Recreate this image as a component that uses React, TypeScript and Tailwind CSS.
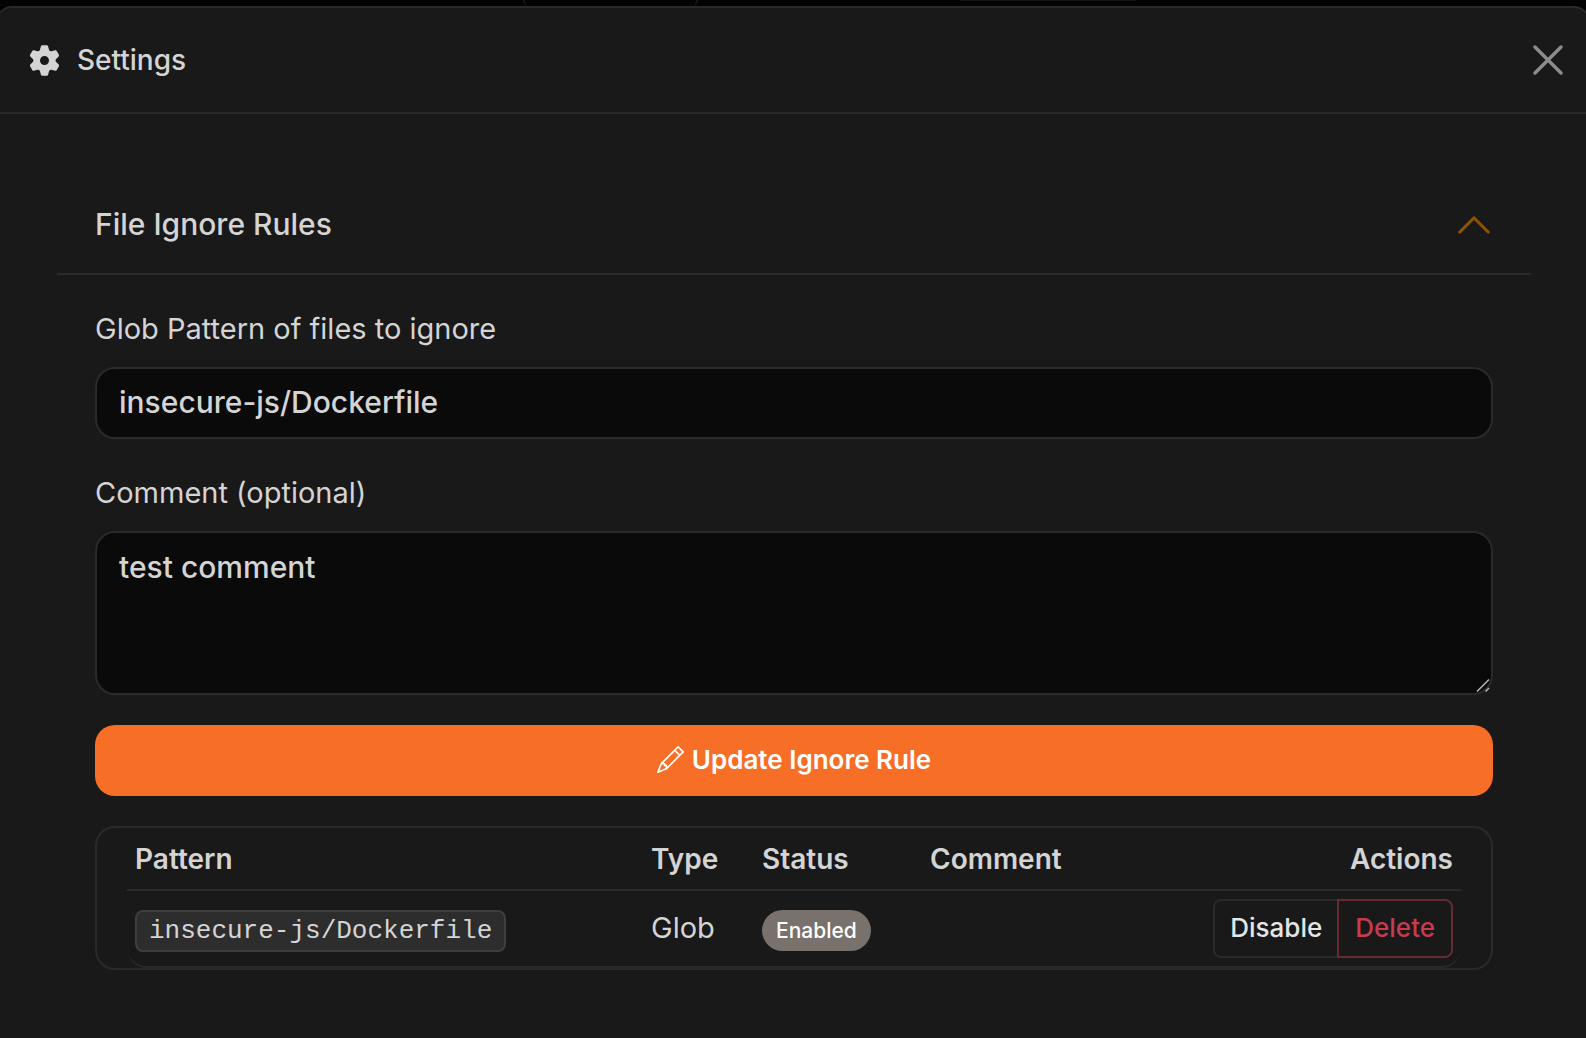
import { useState } from "react";
import { BsChevronUp, BsPencil } from "react-icons/bs";

type IgnoreRule = {
  id: number;
  pattern: string;
  type: string;
  enabled: boolean;
  comment: string;
};

const initialRules: IgnoreRule[] = [
  {
    id: 1,
    pattern: "insecure-js/Dockerfile",
    type: "Glob",
    enabled: true,
    comment: "",
  },
];

// six rounded teeth around a thick ring
const GearIcon = () => (
  <svg
    viewBox="-15.5 -15.5 31 31"
    className="size-[31px]"
    fill="currentColor"
    stroke="currentColor"
    strokeLinejoin="round"
    aria-hidden="true"
  >
    <circle r="7.8" fill="none" strokeWidth="6.6" />
    {[0, 60, 120, 180, 240, 300].map((deg) => (
      <path
        key={deg}
        d="M-2.3-14H2.3L3.8-8.5H-3.8Z"
        strokeWidth="2.6"
        transform={`rotate(${deg})`}
      />
    ))}
  </svg>
);

const CloseIcon = () => (
  <svg viewBox="0 0 30 30" className="size-[30px]" aria-hidden="true">
    <path
      d="M2 2 28 28M28 2 2 28"
      fill="none"
      stroke="currentColor"
      strokeWidth="3.4"
      strokeLinecap="round"
    />
  </svg>
);

const RulesTable = ({
  rules,
  onToggle,
  onDelete,
}: {
  rules: IgnoreRule[];
  onToggle: (id: number) => void;
  onDelete: (id: number) => void;
}) => (
  <div className="rounded-[20px] border-2 border-[#2a2a2a] px-[30px]">
    <div className="overflow-hidden rounded-b-[20px] border-b-2 border-[#2a2a2a]">
      <table className="w-full text-left text-[29px] leading-[44px]">
        <thead className="text-[28px]">
          <tr className="border-b-2 border-[#2a2a2a]">
            <th className="w-[516px] px-2 pt-[9px] pb-2 font-semibold">Pattern</th>
            <th className="w-[111px] px-2 pt-[9px] pb-2 font-semibold">Type</th>
            <th className="w-[168px] px-2 pt-[9px] pb-2 font-semibold">Status</th>
            <th className="px-2 pt-[9px] pb-2 font-semibold">Comment</th>
            <th className="px-2 pt-[9px] pb-2 text-right font-semibold">Actions</th>
          </tr>
        </thead>
        <tbody>
          {rules.map((rule) => (
            <tr key={rule.id}>
              <td className="p-2">
                <code className="mt-1 flex h-[42px] w-fit items-center rounded-lg border-2 border-[#3e3e3e] bg-[#2d2d2d] px-3 font-['Liberation_Mono',monospace] text-[26px]">
                  {rule.pattern}
                </code>
              </td>
              <td className="px-2 pt-2 pb-[10px]">{rule.type}</td>
              <td className="p-2">
                <span className="mt-1 flex h-[41px] w-fit items-center rounded-full bg-[#79716b] px-[14px] text-[21px] font-medium text-white">
                  {rule.enabled ? "Enabled" : "Disabled"}
                </span>
              </td>
              <td className="p-2">{rule.comment}</td>
              <td className="p-2">
                <div className="flex justify-end text-[26px] font-medium">
                  <button
                    type="button"
                    onClick={() => onToggle(rule.id)}
                    className="h-[59px] rounded-l-lg border-2 border-r-0 border-[#2a2a2a] px-[15px] pb-0.5 text-[#e5e5e5]"
                  >
                    {rule.enabled ? "Disable" : "Enable"}
                  </button>
                  <button
                    type="button"
                    onClick={() => onDelete(rule.id)}
                    className="h-[59px] rounded-r-lg border-2 border-[#672932] px-4 pb-0.5 text-[#c53c51]"
                  >
                    Delete
                  </button>
                </div>
              </td>
            </tr>
          ))}
        </tbody>
      </table>
    </div>
  </div>
);

export default function App() {
  const [rules, setRules] = useState(initialRules);
  const [open, setOpen] = useState(true);

  const toggleRule = (id: number) =>
    setRules(rules.map((r) => (r.id === id ? { ...r, enabled: !r.enabled } : r)));
  const deleteRule = (id: number) => setRules(rules.filter((r) => r.id !== id));

  return (
    <div className="flex min-h-screen flex-col overflow-hidden bg-[#030303] font-['Inter',sans-serif] text-[#d4d4d4]">
      {/* sliver of the dimmed page behind the dialog */}
      <div className="flex h-[6px] items-start pl-[33%]" aria-hidden="true">
        <div className="h-[6px] w-[175px] rounded-b-xl border-x-2 border-[#161616]" />
        <div className="ml-[262px] h-px w-[176px] bg-[#141414]" />
      </div>
      <div
        role="dialog"
        aria-labelledby="settings-title"
        className="-mx-1 flex grow flex-col rounded-t-2xl border-2 border-b-0 border-[#2a2a2a] bg-[#191919]"
      >
        {/* header */}
        <header className="flex h-[106px] items-center gap-[17px] border-b-2 border-[#2a2a2a] pr-[25px] pl-[31px]">
          <GearIcon />
          <h1 id="settings-title" className="text-[28px] font-medium">
            Settings
          </h1>
          <button type="button" aria-label="Close" className="ml-auto text-[#8c8c8c]">
            <CloseIcon />
          </button>
        </header>

        <main className="pt-[60px] pr-[57px] pb-[66px] pl-[59px]">
          <h2 className="border-b-2 border-[#2a2a2a]">
            <button
              type="button"
              aria-expanded={open}
              onClick={() => setOpen(!open)}
              className="flex h-[99px] w-full items-center justify-between px-[38px] pt-0.5 text-[30px] font-medium"
            >
              File Ignore Rules
              <BsChevronUp
                strokeWidth={0.3}
                className={
                  open ? "size-[38px] text-[#8f5400]" : "size-[38px] rotate-180 text-[#8f5400]"
                }
              />
            </button>
          </h2>

          {open && (
            <div className="px-[38px] pt-8">
              <form onSubmit={(e) => e.preventDefault()}>
                <label htmlFor="pattern" className="block text-[29px] leading-[44px]">
                  Glob Pattern of files to ignore
                </label>
                <input
                  id="pattern"
                  type="text"
                  defaultValue="insecure-js/Dockerfile"
                  className="mt-4 h-[72px] w-full rounded-[20px] border-2 border-[#2a2a2a] bg-[#0a0a0a] px-[22px] pb-0.5 text-[30px] font-medium"
                />

                <label htmlFor="comment" className="mt-8 block text-[29px] leading-[44px]">
                  Comment (optional)
                </label>
                <div className="relative mt-4">
                  <textarea
                    id="comment"
                    defaultValue="test comment"
                    className="block h-[164px] w-full rounded-[20px] border-2 border-[#2a2a2a] bg-[#0a0a0a] px-[22px] py-3 text-[30px] leading-[44px] font-medium [&::-webkit-resizer]:bg-transparent"
                  />
                  {/* resize grip */}
                  <svg
                    viewBox="0 0 16 16"
                    className="pointer-events-none absolute right-0.5 bottom-0.5 size-4"
                    aria-hidden="true"
                  >
                    <path
                      d="M2 14.5 14 2.5M10.5 14.5 14 11"
                      fill="none"
                      stroke="#b0b0b0"
                      strokeWidth="1.6"
                    />
                  </svg>
                </div>

                <button
                  type="submit"
                  className="my-[30px] flex h-[71px] w-full items-center justify-center gap-2 rounded-[20px] bg-[#f76e26] pb-0.5 text-[26px] font-semibold text-white"
                >
                  <BsPencil className="size-[27px]" />
                  Update Ignore Rule
                </button>
              </form>

              <RulesTable rules={rules} onToggle={toggleRule} onDelete={deleteRule} />
            </div>
          )}
        </main>
      </div>
    </div>
  );
}
